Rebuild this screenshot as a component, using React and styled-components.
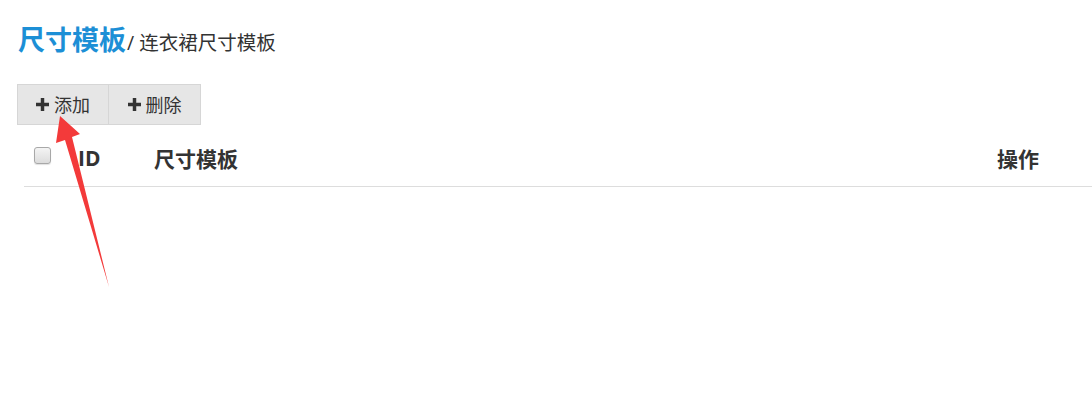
import React from "react";
import styled, { createGlobalStyle } from "styled-components";

const Global = createGlobalStyle`
  html, body { margin: 0; padding: 0; background: #fff; overflow: hidden; }
  body { font-family: "Open Sans", "Noto Sans CJK SC", sans-serif; color: #333; }
`;

const Page = styled.div`
  position: relative;
  width: 1092px;
  height: 395px;
  overflow: hidden;
  padding: 21px 0 0 17px;
  box-sizing: border-box;
`;

const Title = styled.h2`
  margin: 0 0 0 1px;
  font-size: 27px;
  line-height: 38px;
  font-weight: 700;
  color: #1c8fd6;
  display: flex;
  align-items: baseline;
`;

const Sub = styled.span`
  font-size: 19.5px;
  font-weight: 400;
  color: #333;
  margin-left: 1px;
`;

const Toolbar = styled.div`
  display: flex;
  margin-top: 22px;
`;

const Button = styled.button`
  display: flex;
  align-items: center;
  justify-content: center;
  gap: 5px;
  width: ${(p) => p.$w}px;
  height: 41px;
  padding: 0 0 1px;
  border: 1px solid #d6d6d6;
  margin-left: ${(p) => (p.$first ? 0 : -1)}px;
  background: #e6e6e6;
  color: #333;
  font-family: "Open Sans", "Noto Sans CJK SC", sans-serif;
  font-size: 18px;
  cursor: pointer;
`;

const Table = styled.div`
  width: 1160px;
  margin: 0 0 0 7px;
`;

const HeadRow = styled.div`
  display: grid;
  grid-template-columns: 46px 76px 843px 1fr;
  align-items: center;
  height: 61px;
  border-bottom: 1px solid #dddddd;
`;

const Th = styled.div`
  padding-left: ${(p) => p.$pl ?? 8}px;
  font-size: 21px;
  font-weight: 700;
  color: #333;
  padding-top: 4px;
`;

const Check = styled.span`
  display: block;
  width: 15px;
  height: 15px;
  margin-top: -4px;
  border: 1px solid #a8a8a8;
  border-radius: 3px;
  background: linear-gradient(#f4f4f4, #dcdcdc);
  box-shadow: 0 1px 1px rgba(0,0,0,0.12);
`;

const Arrow = styled.svg`
  position: absolute;
  left: 0;
  top: 0;
  pointer-events: none;
`;

const Plus = () => (
  <svg width="13" height="13" viewBox="0 0 12 12">
    <path d="M4.4 0h3.2v4.4H12v3.2H7.6V12H4.4V7.6H0V4.4h4.4z" fill="#333" />
  </svg>
);

export default function App() {
  return (
    <Page>
      <Global />
      <Title>
        尺寸模板<Sub>/ 连衣裙尺寸模板</Sub>
      </Title>
      <Toolbar>
        <Button $first $w={92}>
          <Plus />
          添加
        </Button>
        <Button $w={93}>
          <Plus />
          删除
        </Button>
      </Toolbar>
      <Table>
        <HeadRow>
          <Th $pl={10}>
            <Check />
          </Th>
          <Th>ID</Th>
          <Th>尺寸模板</Th>
          <Th>操作</Th>
        </HeadRow>
      </Table>
      <Arrow width="1092" height="395" viewBox="0 0 1092 395">
        <polygon
          points="60,116 80,134 72,137 109,287 65,140 56,143"
          fill="#f33a3a"
        />
      </Arrow>
    </Page>
  );
}
